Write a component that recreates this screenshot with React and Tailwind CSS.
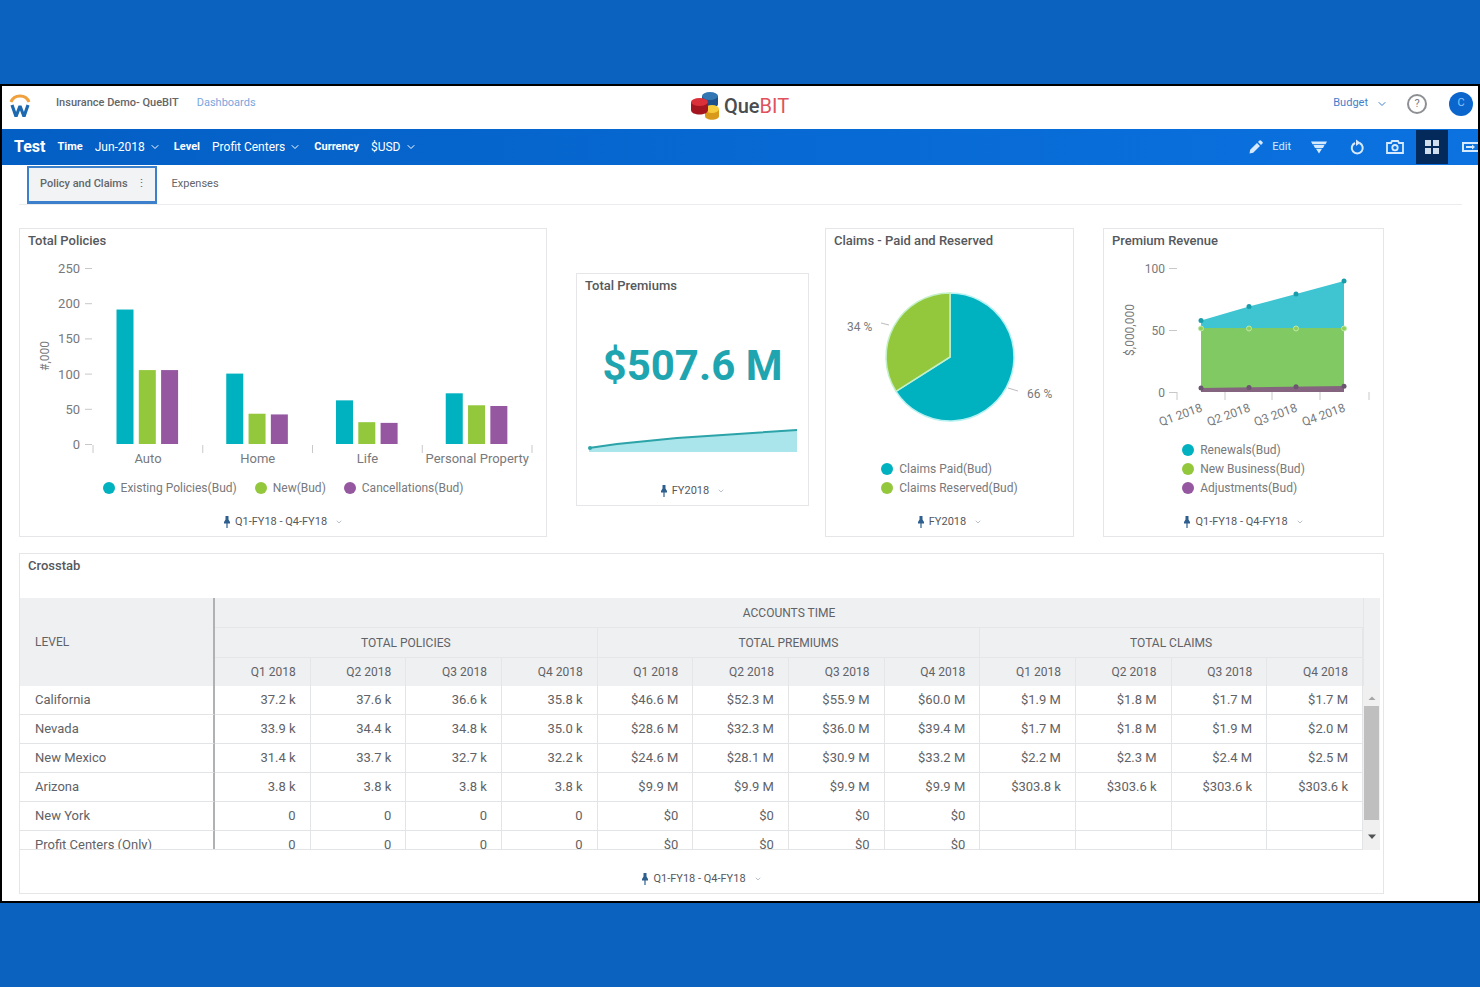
import React from "react";
import { ChevronDown } from "lucide-react";

const TEAL = "#00b1bf";
const GREEN = "#93c83d";
const PURPLE = "#9557a0";

const policies = [
  { name: "Auto", values: [191, 105, 105] },
  { name: "Home", values: [100, 43, 42] },
  { name: "Life", values: [62, 31, 30] },
  { name: "Personal Property", values: [72, 55, 54] },
];

const quarters = ["Q1 2018", "Q2 2018", "Q3 2018", "Q4 2018"];
const groups = ["TOTAL POLICIES", "TOTAL PREMIUMS", "TOTAL CLAIMS"];

const rows = [
  ["California", "37.2 k", "37.6 k", "36.6 k", "35.8 k", "$46.6 M", "$52.3 M", "$55.9 M", "$60.0 M", "$1.9 M", "$1.8 M", "$1.7 M", "$1.7 M"],
  ["Nevada", "33.9 k", "34.4 k", "34.8 k", "35.0 k", "$28.6 M", "$32.3 M", "$36.0 M", "$39.4 M", "$1.7 M", "$1.8 M", "$1.9 M", "$2.0 M"],
  ["New Mexico", "31.4 k", "33.7 k", "32.7 k", "32.2 k", "$24.6 M", "$28.1 M", "$30.9 M", "$33.2 M", "$2.2 M", "$2.3 M", "$2.4 M", "$2.5 M"],
  ["Arizona", "3.8 k", "3.8 k", "3.8 k", "3.8 k", "$9.9 M", "$9.9 M", "$9.9 M", "$9.9 M", "$303.8 k", "$303.6 k", "$303.6 k", "$303.6 k"],
  ["New York", "0", "0", "0", "0", "$0", "$0", "$0", "$0", "", "", "", ""],
  ["Profit Centers (Only)", "0", "0", "0", "0", "$0", "$0", "$0", "$0", "", "", "", ""],
];

function Card({ title, period, className = "", children }) {
  return (
    <section className={`flex flex-col border border-[#e6e6e8] bg-white ${className}`}>
      <h2 className="h-6 px-2 text-[13px] leading-6 font-medium text-[#55585c]">{title}</h2>
      {children}
      <div className="mt-auto flex h-7 items-center justify-center gap-1 text-[11px] text-[#55585c]">
        <svg viewBox="0 0 8 12" className="h-3 w-2" fill="#2f5f8f">
          <path d="M2.500 0h3v3.500L7 6v1.500H4.600V12H3.400V7.500H1V6l1.500-2.500z" />
        </svg>
        <select aria-label={`${title} period`} className="field-sizing-content appearance-none bg-transparent">
          <option>{period}</option>
        </select>
        <ChevronDown className="ml-1 h-2 w-2 text-gray-400" />
      </div>
    </section>
  );
}

function LegendItem({ color, children }) {
  return (
    <li className="flex h-[19px] items-center gap-[6px]">
      <svg viewBox="0 0 12 12" className="h-3 w-3">
        <circle cx="6" cy="6" r="6" fill={color} />
      </svg>
      {children}
    </li>
  );
}

function PoliciesChart() {
  return (
    <svg viewBox="0 0 526 218" className="w-full" fontSize="13" fill="#77797c" stroke="none">
      {[0, 50, 100, 150, 200, 250].map((v) => (
        <g key={v}>
          <text x="60" y={196 - v * 0.704} textAnchor="end">{v}</text>
          <path d={`M65 ${191.5 - v * 0.704}h7`} stroke="#c8c8ca" />
        </g>
      ))}
      <text transform="translate(29 103) rotate(-90)" textAnchor="middle" fontSize="12">#,000</text>
      {[0, 1, 2, 3, 4].map((i) => (
        <path key={i} d={`M${73 + i * 109.75} 192v8`} stroke="#c8c8ca" />
      ))}
      {policies.map((p, i) => (
        <g key={p.name}>
          {p.values.map((v, j) => (
            <rect
              key={j}
              x={96.5 + i * 109.75 + j * 22.3}
              y={191 - v * 0.704}
              width="17"
              height={v * 0.704}
              fill={[TEAL, GREEN, PURPLE][j]}
            />
          ))}
          <text x={128 + i * 109.75} y="210" textAnchor="middle">{p.name}</text>
        </g>
      ))}
    </svg>
  );
}

function ClaimsChart() {
  return (
    <svg viewBox="0 0 247 203" className="w-full" fontSize="12" fill="#77797c">
      <path d="M124 104V40a64 64 0 1 1-54 98.300z" fill={TEAL} stroke="#b5f1f1" strokeWidth="1.500" />
      <path d="M124 104V40a64 64 0 0 0-54 98.300z" fill={GREEN} stroke="#c3f0c8" strokeWidth="1.500" />
      <path d="M55 70l8 2M182 135l10 3" stroke="#bcbcbe" fill="none" />
      <text x="21" y="78">34 %</text>
      <text x="201" y="145">66 %</text>
    </svg>
  );
}

function RevenueChart() {
  const xs = [97, 145, 192, 240];
  const top = [67.5, 53.5, 41, 28];
  return (
    <svg viewBox="0 0 279 184" className="w-full" fontSize="12" fill="#77797c">
      {[0, 50, 100].map((v) => (
        <g key={v}>
          <text x="61" y={143.5 - v * 1.24} textAnchor="end">{v}</text>
          <path d={`M65 ${139.5 - v * 1.24}h8`} stroke="#c8c8ca" />
        </g>
      ))}
      <text transform="translate(30 77) rotate(-90)" textAnchor="middle">$,000,000</text>
      {[73, 121, 168, 216, 265].map((x) => (
        <path key={x} d={`M${x} 139v8`} stroke="#c8c8ca" />
      ))}
      <path d="M97 67.500L145 53.500L192 41L240 28V76H97z" fill="#3fc5d1" />
      <path d="M97 75H240V136H97z" fill="#80c963" />
      <path d="M97 135L240 133V139H97z" fill="#84647f" />
      {xs.map((x, i) => (
        <g key={x}>
          <circle cx={x} cy={top[i]} r="2.500" fill="#1a9dab" />
          <circle cx={x} cy="75.500" r="2.500" fill="#8fd05a" stroke="#bfe8a8" />
          <circle cx={x} cy={135 - i * 0.6} r="2.500" fill="#6c5570" />
          <text transform={`translate(${x + 2} 158) rotate(-20)`} textAnchor="end">{quarters[i]}</text>
        </g>
      ))}
    </svg>
  );
}

function BarSelect({ id, label, value }) {
  return (
    <div className="flex items-center text-white">
      <label htmlFor={id} className="mr-3 text-[11px] font-bold">{label}</label>
      <select id={id} className="field-sizing-content appearance-none bg-transparent text-xs">
        <option>{value}</option>
      </select>
      <ChevronDown className="ml-1 h-3 w-3" />
    </div>
  );
}

function Crosstab() {
  return (
    <div className="mt-5 flex h-[252px] overflow-hidden pr-[3px]">
      <div className="min-w-0 flex-1 overflow-hidden border-b border-[#e3e4e6]">
        <table className="w-full table-fixed border-separate border-spacing-0 text-[13px] text-[#5f6266]">
          <colgroup>
            <col className="w-[195px]" />
          </colgroup>
          <thead className="bg-[#eff0f2] text-xs">
            <tr className="h-[30px]">
              <th rowSpan={3} className="border-r-2 border-[#b0b1b3] pl-[15px] text-left font-normal">LEVEL</th>
              <th colSpan={12} className="border-b border-[#e5e6e8] font-normal">ACCOUNTS TIME</th>
            </tr>
            <tr className="h-[30px]">
              {groups.map((g) => (
                <th key={g} colSpan={4} className="border-r border-b border-[#e5e6e8] font-normal">{g}</th>
              ))}
            </tr>
            <tr className="h-7">
              {groups.map((g) =>
                quarters.map((q) => (
                  <th key={g + q} className="border-r border-[#e5e6e8] pr-[14px] text-right font-normal">{q}</th>
                ))
              )}
            </tr>
          </thead>
          <tbody>
            {rows.map(([name, ...cells]) => (
              <tr key={name} className="h-[29px]">
                <th className="border-r-2 border-b border-r-[#b0b1b3] border-b-[#e3e4e6] pl-[15px] text-left font-normal">{name}</th>
                {cells.map((c, i) => (
                  <td key={i} className="border-r border-b border-[#e3e4e6] pr-[14px] text-right">{c}</td>
                ))}
              </tr>
            ))}
          </tbody>
        </table>
      </div>
      <div className="flex w-[17px] flex-col items-center bg-[#f0f0f1]">
        <div className="h-[88px] w-full border-l border-[#e5e6e8] bg-[#eff0f2]" />
        <svg viewBox="0 0 16 20" className="h-5 w-4" fill="#a5a5a7">
          <path d="M4.500 14L8 10.500L11.500 14z" />
        </svg>
        <div className="h-[114px] w-[15px] bg-[#bfbfc0]" />
        <svg viewBox="0 0 16 30" className="h-[30px] w-4" fill="#505254">
          <path d="M4 14.500h8L8 19z" />
        </svg>
      </div>
    </div>
  );
}

export default function App() {
  return (
    <div className="flex min-h-screen items-center bg-[#0b63bf] font-[Roboto,sans-serif]">
      <div className="w-full min-w-0 overflow-hidden border-2 border-black bg-white">
        <header className="grid h-[43px] grid-cols-[1fr_auto_1fr] items-center pr-[5px] pl-1">
          <div className="flex items-center pb-2 text-[11px]">
            <svg viewBox="0 0 26 28" className="mt-1 h-7 w-[26px]" fill="none">
              <path d="M5 10a9.500 9 0 0 1 18 0" stroke="#f0a03c" strokeWidth="3" />
              <path d="M6 13l4 11.500L14 14l4 10.500L22 13" stroke="#1d69b0" strokeWidth="3.200" strokeLinejoin="bevel" />
            </svg>
            <span className="ml-6 font-medium text-[#63666a]">Insurance Demo- QueBIT</span>
            <a href="#dashboards" className="ml-[18px] text-[#79a6dc]">Dashboards</a>
          </div>
          <div className="flex items-center pb-1">
            <svg viewBox="0 0 34 32" className="h-8 w-[34px]">
              <path d="M12 6v8c0 5 16 5 16 0V6z" fill="#1c5289" />
              <ellipse cx="20" cy="6" rx="8" ry="4" fill="#3277b3" />
              <path d="M15 19v7c0 5 14 5 14 0v-7z" fill="#d99a1c" />
              <ellipse cx="22" cy="19" rx="7" ry="4" fill="#f6cb3c" />
              <path d="M1 12v8c0 6 17 6 17 0v-8z" fill="#a3161f" />
              <ellipse cx="9.500" cy="12" rx="8.500" ry="4" fill="#d9303a" />
            </svg>
            <span className="text-xl font-medium text-[#4a4c50]">
              Que<span className="font-normal text-[#e0515c]">BIT</span>
            </span>
          </div>
          <div className="flex items-center justify-end pb-2 text-[11px] text-[#3f7fcb]">
            <select aria-label="Version" className="field-sizing-content appearance-none bg-transparent">
              <option>Budget</option>
            </select>
            <ChevronDown className="ml-2 h-3 w-3" />
            <button aria-label="Help" className="ml-[19px] h-5 w-5 rounded-full border-2 border-[#8d8f92] text-[11px] leading-4 text-[#77797c]">?</button>
            <button className="ml-[22px] h-6 w-6 rounded-full bg-[#0a66cc] text-[11px] text-[#8cc4ff]">C</button>
          </div>
        </header>

        <nav className="flex h-9 items-center bg-linear-to-r from-[#045fc4] to-[#0b72e0] pl-3">
          <h1 className="mr-3 text-base font-bold text-white">Test</h1>
          <div className="flex items-center gap-[13px]">
            <BarSelect id="time" label="Time" value="Jun-2018" />
            <BarSelect id="level" label="Level" value="Profit Centers" />
            <BarSelect id="currency" label="Currency" value="$USD" />
          </div>
          <div className="ml-auto flex h-full items-center text-[#d6eaff]">
            <button className="flex items-center gap-2 text-[11px]">
              <svg viewBox="0 0 16 16" className="h-4 w-4" fill="currentColor">
                <path d="M1.500 14.500l.7-3.700L9 4l3 3-6.800 6.800zM10 3l1.500-1.500q.7-.7 1.400 0l1.600 1.600q.7.700 0 1.400L13 6z" />
              </svg>
              Edit
            </button>
            <button aria-label="Filter" className="ml-5">
              <svg viewBox="0 0 16 16" className="h-4 w-4" fill="currentColor">
                <path d="M0 2.500h16l-1.500 2.700h-13zM2.500 6h11L12 9H4zM5 9.800h6L8 14.500z" />
              </svg>
            </button>
            <button aria-label="Refresh" className="ml-[22px]">
              <svg viewBox="0 0 16 16" className="h-4 w-4" fill="none" stroke="currentColor" strokeWidth="2">
                <path d="M6 4A5.500 5.500 0 1 0 10.500 4" />
                <path d="M7 .5l4.500 3.300L7 7z" fill="currentColor" stroke="none" />
              </svg>
            </button>
            <button aria-label="Snapshot" className="ml-[21px]">
              <svg viewBox="0 0 18 16" className="h-4 w-[18px]" fill="none" stroke="currentColor" strokeWidth="1.800">
                <path d="M1 4h4l1-2h6l1 2h4v10H1z" />
                <circle cx="9" cy="8.700" r="2.700" />
              </svg>
            </button>
            <button aria-label="Grid view" className="ml-3 flex h-[34px] w-8 items-center justify-center bg-[#042a5c]">
              <svg viewBox="0 0 14 14" className="h-[14px] w-[14px]" fill="#cfdded">
                <path d="M0 0h6v6H0zM8 0h6v6H8zM0 8h6v6H0zM8 8h6v6H8z" />
              </svg>
            </button>
            <button aria-label="Presentation view" className="ml-[14px] overflow-hidden">
              <svg viewBox="0 0 16 10" className="h-[10px] w-4" fill="none" stroke="currentColor" strokeWidth="2">
                <path d="M16 1H1v8h15M4 5h6" />
                <path d="M10 2.500L13 5L10 7.500z" fill="currentColor" stroke="none" />
              </svg>
            </button>
          </div>
        </nav>

        <div className="mr-4 ml-[17px] flex h-10 items-start border-b border-[#ececee] pl-2 text-[11px] text-[#63666a]">
          <button className="mt-px flex h-[38px] items-center border-2 border-b-3 border-[#3c80cc] bg-[#f1f3f5] pr-2 pl-[11px] font-medium">
            Policy and Claims
            <span className="ml-2 font-normal">⋮</span>
          </button>
          <button className="ml-[15px] h-[38px]">Expenses</button>
        </div>

        <main className="flex flex-col gap-4 pt-[23px] pr-[94px] pb-[7px] pl-[17px]">
          <div className="grid grid-cols-[528fr_498fr_281fr] gap-[29px]">
            <Card title="Total Policies" period="Q1-FY18 - Q4-FY18">
              <PoliciesChart />
              <ul className="mt-[7px] flex justify-center gap-[18px] pb-[11px] text-[12px] text-[#77797c]">
                <LegendItem color={TEAL}>Existing Policies(Bud)</LegendItem>
                <LegendItem color={GREEN}>New(Bud)</LegendItem>
                <LegendItem color={PURPLE}>Cancellations(Bud)</LegendItem>
              </ul>
            </Card>

            <div className="grid grid-cols-[233fr_249fr] gap-4">
              <Card title="Total Premiums" period="FY2018" className="mt-[45px] mb-[31px]">
                <p className="mt-11 text-center text-[42px] leading-[48px] font-bold text-[#1fa5b0]">$507.6 M</p>
                <svg viewBox="0 0 231 26" className="mt-[37px] w-full">
                  <path d="M12 21L40 17L100 11L220 3V25H12z" fill="#a9e5ea" />
                  <path d="M12 21L40 17L100 11L220 3" stroke="#2ba3a8" strokeWidth="2" fill="none" />
                  <circle cx="13" cy="21" r="2" fill="#2ba3a8" />
                </svg>
              </Card>

              <Card title="Claims - Paid and Reserved" period="FY2018">
                <ClaimsChart />
                <ul className="mx-auto mt-[3px] text-[12px] text-[#77797c]">
                  <LegendItem color={TEAL}>Claims Paid(Bud)</LegendItem>
                  <LegendItem color={GREEN}>Claims Reserved(Bud)</LegendItem>
                </ul>
              </Card>
            </div>

            <Card title="Premium Revenue" period="Q1-FY18 - Q4-FY18">
              <RevenueChart />
              <ul className="mx-auto mt-[3px] text-[12px] text-[#77797c]">
                <LegendItem color={TEAL}>Renewals(Bud)</LegendItem>
                <LegendItem color={GREEN}>New Business(Bud)</LegendItem>
                <LegendItem color={PURPLE}>Adjustments(Bud)</LegendItem>
              </ul>
            </Card>
          </div>

          <Card title="Crosstab" period="Q1-FY18 - Q4-FY18" className="min-h-[341px]">
            <Crosstab />
          </Card>
        </main>
      </div>
    </div>
  );
}
